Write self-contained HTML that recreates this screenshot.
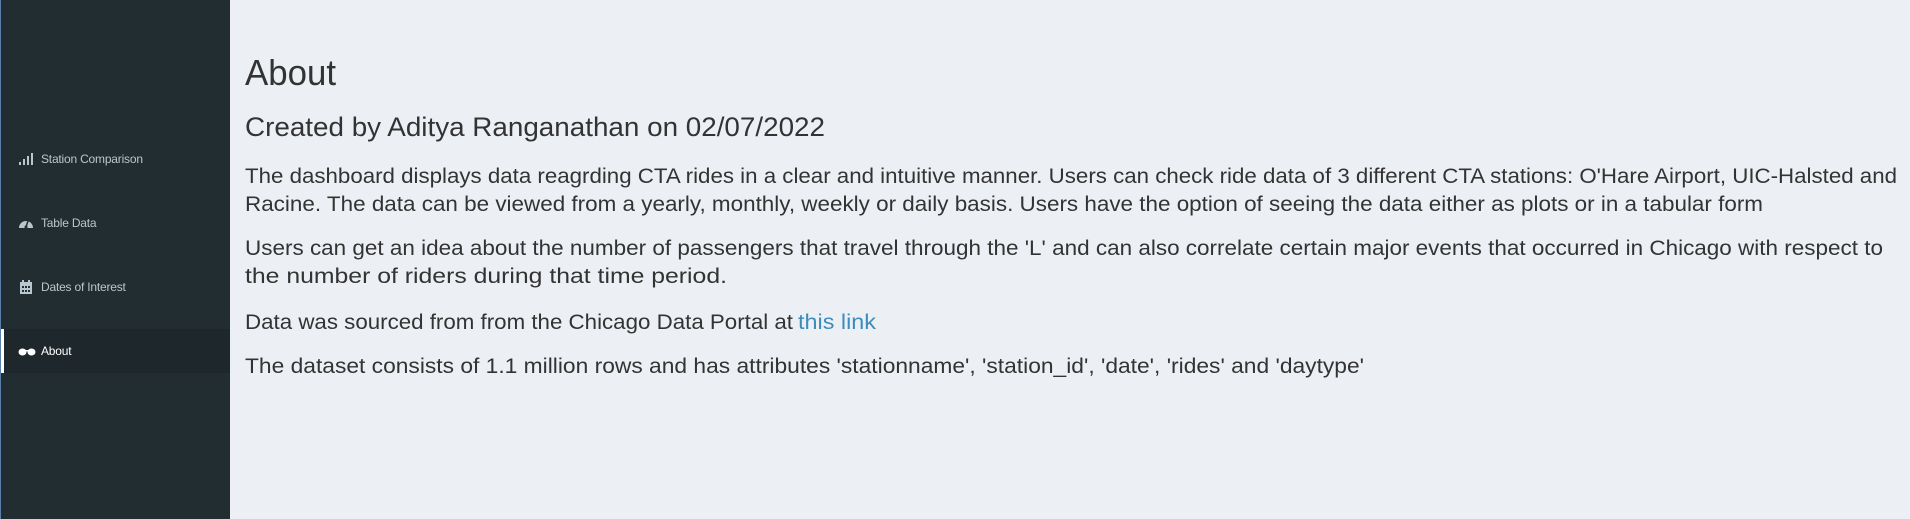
<!DOCTYPE html>
<html><head><meta charset="utf-8"><style>
html,body{margin:0;padding:0;width:1910px;height:519px;overflow:hidden;background:#ecf0f5;font-family:"Liberation Sans",sans-serif}
#sb{position:absolute;left:0;top:0;width:230px;height:519px;background:#222d32;border-left:1px solid #5a7fa8;box-sizing:border-box}
.it{position:absolute;left:0;width:229px;height:44px;color:#b8c7ce;font-size:12px;line-height:44px}
.it span{position:absolute;left:40px;letter-spacing:-0.2px}
.it svg{position:absolute;left:17px;top:15px}
.act{background:#1e282c;color:#fff;border-left:3px solid #fff;left:0;box-sizing:border-box}
.act svg{left:14px}.act span{left:37px}
#m{position:absolute;left:230px;top:0}
</style></head><body>
<div id="sb">
<div class="it" style="top:137px"><svg width="16" height="14" viewBox="0 0 16 14"><rect x="1" y="10" width="2" height="3" fill="#b8c7ce"/><rect x="5" y="7" width="2" height="6" fill="#b8c7ce"/><rect x="9" y="4" width="2" height="9" fill="#b8c7ce"/><rect x="13" y="1" width="2" height="12" fill="#b8c7ce"/></svg><span>Station Comparison</span></div>
<div class="it" style="top:201px"><svg width="16" height="14" viewBox="0 0 16 14"><path d="M1 12 A7 7 0 1 1 15 12 Z" fill="#b8c7ce"/><path d="M8 11 L10 5" stroke="#222d32" stroke-width="1.5"/><circle cx="8" cy="11" r="1.5" fill="#222d32"/></svg><span>Table Data</span></div>
<div class="it" style="top:265px"><svg width="16" height="14" viewBox="0 0 16 14"><rect x="2" y="2" width="12" height="12" fill="#b8c7ce"/><rect x="4" y="0" width="2" height="3" fill="#b8c7ce"/><rect x="10" y="0" width="2" height="3" fill="#b8c7ce"/><g fill="#222d32"><rect x="4" y="6" width="2" height="2"/><rect x="7" y="6" width="2" height="2"/><rect x="10" y="6" width="2" height="2"/><rect x="4" y="10" width="2" height="2"/><rect x="7" y="10" width="2" height="2"/><rect x="10" y="10" width="2" height="2"/></g></svg><span>Dates of Interest</span></div>
<div class="it act" style="top:329px"><svg width="18" height="14" viewBox="0 0 18 14"><ellipse cx="4.5" cy="8" rx="4" ry="3.5" fill="#fff"/><ellipse cx="13.5" cy="8" rx="4" ry="3.5" fill="#fff"/><rect x="7" y="6" width="4" height="1.5" fill="#fff"/></svg><span>About</span></div>
</div>
<svg id="m" width="1680" height="519" style="font-family:'Liberation Sans',sans-serif;fill:#333">
<text x="15" y="85" font-size="36" textLength="91" lengthAdjust="spacingAndGlyphs">About</text>
<text x="15" y="136" font-size="27" textLength="580" lengthAdjust="spacingAndGlyphs">Created by Aditya Ranganathan on 02/07/2022</text>
<g font-size="21">
<text x="15" y="183" textLength="1652" lengthAdjust="spacingAndGlyphs">The dashboard displays data reagrding CTA rides in a clear and intuitive manner. Users can check ride data of 3 different CTA stations: O'Hare Airport, UIC-Halsted and</text>
<text x="15" y="211" textLength="1518" lengthAdjust="spacingAndGlyphs">Racine. The data can be viewed from a yearly, monthly, weekly or daily basis. Users have the option of seeing the data either as plots or in a tabular form</text>
<text x="15" y="255" textLength="1638" lengthAdjust="spacingAndGlyphs">Users can get an idea about the number of passengers that travel through the 'L' and can also correlate certain major events that occurred in Chicago with respect to</text>
<text x="15" y="283" textLength="482" lengthAdjust="spacingAndGlyphs">the number of riders during that time period.</text>
<text x="15" y="329" textLength="548" lengthAdjust="spacingAndGlyphs">Data was sourced from from the Chicago Data Portal at</text>
<text x="568" y="329" textLength="78" lengthAdjust="spacingAndGlyphs" fill="#3c8dbc">this link</text>
<text x="15" y="373" textLength="1119" lengthAdjust="spacingAndGlyphs">The dataset consists of 1.1 million rows and has attributes 'stationname', 'station_id', 'date', 'rides' and 'daytype'</text>
</g>
</svg>
</body></html>
